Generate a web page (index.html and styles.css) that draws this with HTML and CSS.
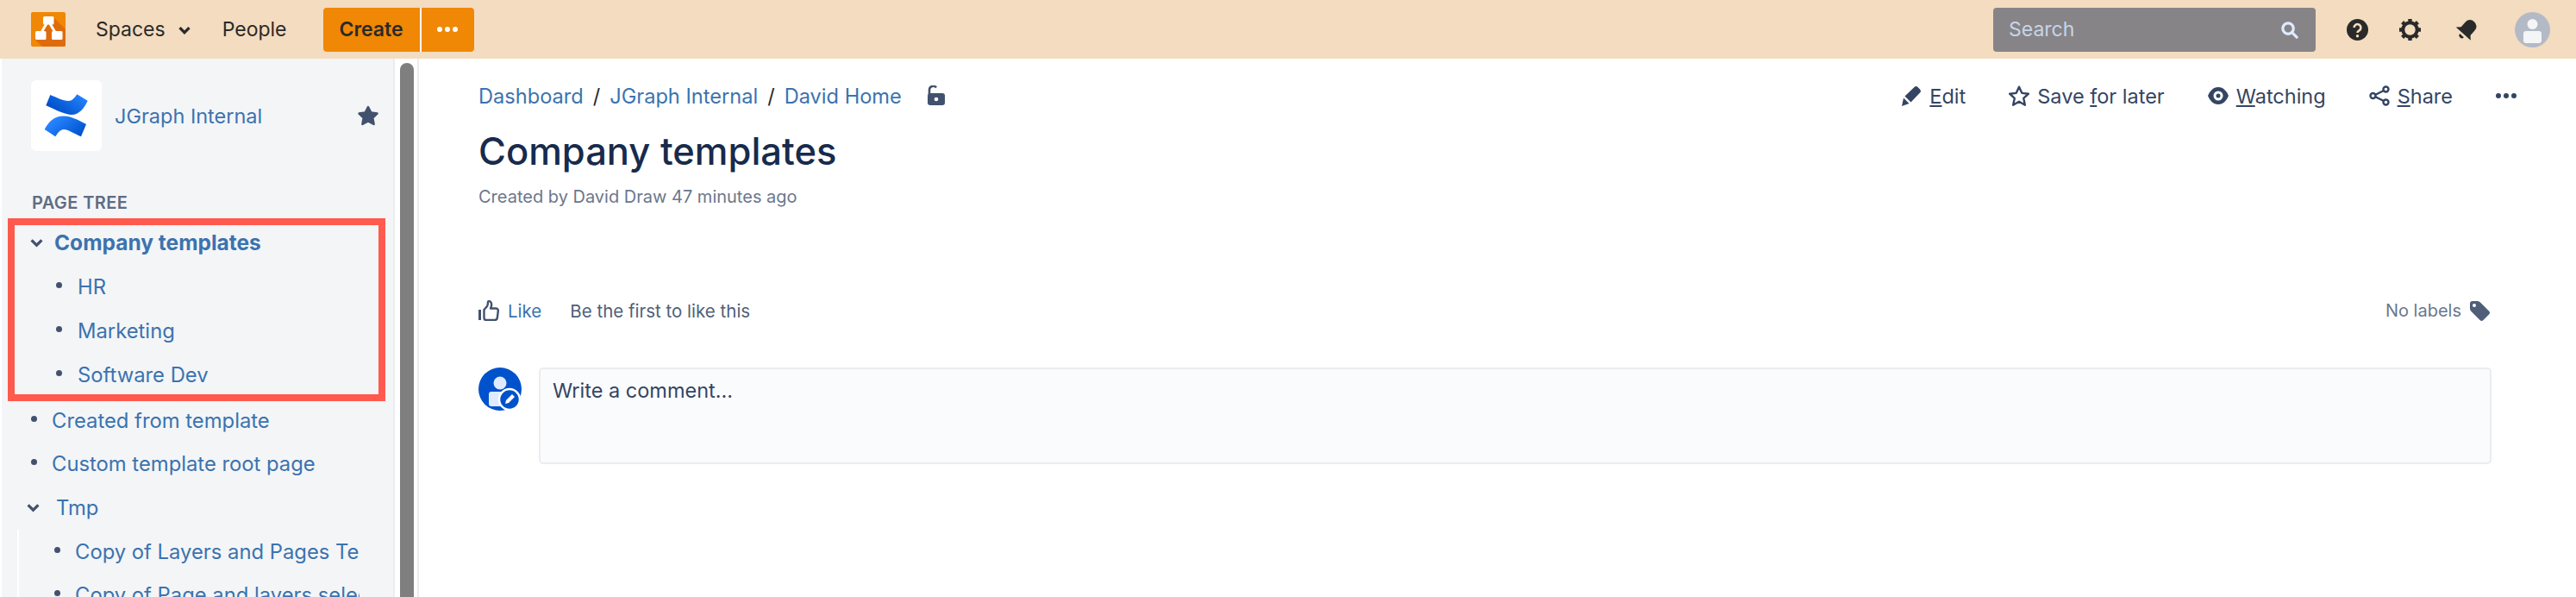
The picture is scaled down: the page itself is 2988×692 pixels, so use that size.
FILE: index.html
```html
<!DOCTYPE html>
<html lang="en">
<head>
  <meta charset="UTF-8" />
  <title>Company templates</title>
  <link rel="stylesheet" href="styles.css">
</head>
<body>

<header class="topbar">
  <div class="topbar-left">
    <svg class="app-logo" viewBox="0 0 40 40">
      <rect width="40" height="40" rx="2" fill="#f08705"/>
      <path d="M27 7 40 20V38a2 2 0 0 1-2 2H13L4 31z" fill="#df6c0c"/>
      <path d="M20 10 10 27M20 10 30 27" stroke="#fff" stroke-width="3" fill="none"/>
      <rect x="14" y="5" width="12.500" height="9.500" rx="1.500" fill="#fff"/>
      <rect x="5" y="22" width="12.500" height="10" rx="1.500" fill="#fff"/>
      <rect x="24" y="22" width="12.500" height="10" rx="1.500" fill="#fff"/>
    </svg>
    <span class="nav-item nav-spaces">Spaces
      <svg class="chev" viewBox="0 0 14 10"><path d="M2 2l5 5 5-5" fill="none" stroke="#2a2a2a" stroke-width="3"/></svg>
    </span>
    <span class="nav-item nav-people">People</span>
    <div class="create-group">
      <span class="create-btn">Create</span>
      <span class="create-more"><i></i><i></i><i></i></span>
    </div>
  </div>
  <div class="topbar-right">
    <div class="search">
      <span>Search</span>
      <svg viewBox="0 0 22 22"><circle cx="9.500" cy="9.500" r="6.500" fill="none" stroke="#deebff" stroke-width="3.400"/><path d="M14.500 14.500 20 20" stroke="#deebff" stroke-width="3.400" stroke-linecap="round"/></svg>
    </div>
    <svg class="top-icon" viewBox="0 0 25 25">
      <circle cx="12.500" cy="12.500" r="12.500" fill="#2a2a2a"/>
      <path d="M8.600 10a3.900 3.900 0 1 1 5.900 3.300c-1.300.8-2 1.300-2 2.700" fill="none" stroke="#f3dcc0" stroke-width="2.600"/>
      <circle cx="12.500" cy="19.800" r="1.700" fill="#f3dcc0"/>
    </svg>
    <svg class="top-icon" viewBox="0 0 25 25">
      <circle cx="12.500" cy="12.500" r="8.200" fill="none" stroke="#2a2a2a" stroke-width="4"/>
      <g stroke="#2a2a2a" stroke-width="4.400">
        <path d="M12.500 0v4M12.500 21v4M0 12.500h4M21 12.500h4M3.600 3.600l2.900 2.900M18.500 18.500l2.900 2.900M21.400 3.600l-2.900 2.900M6.500 18.500l-2.900 2.900"/>
      </g>
    </svg>
    <svg class="top-icon bell" viewBox="0 0 24 24">
      <g transform="rotate(42 12 12)" fill="#2a2a2a">
        <path d="M12 0a6.500 6.500 0 0 1 7 7v7l4 4H1l4-4V7a6.500 6.500 0 0 1 7-7z"/>
        <path d="M9 20.500h6a3 3 0 0 1-6 0z"/>
      </g>
    </svg>
    <svg class="top-avatar" viewBox="0 0 41 41">
      <circle cx="20.500" cy="20.500" r="20.500" fill="#b3bac5"/>
      <circle cx="20.500" cy="14" r="6" fill="#f4f5f7"/>
      <rect x="10" y="22" width="21" height="14" rx="3" fill="#f4f5f7"/>
    </svg>
  </div>
</header>

<div class="layout">
  <aside class="sidebar">
    <div class="space-head">
      <div class="space-logo">
        <svg viewBox="0 0 82 82" width="82" height="82">
          <defs>
            <linearGradient id="cfA" x1="1" y1="0.2" x2="0.2" y2="0.7"><stop offset="0" stop-color="#2684ff"/><stop offset="1" stop-color="#0052cc"/></linearGradient>
            <linearGradient id="cfB" x1="0.1" y1="0.4" x2="0.9" y2="0.9"><stop offset="0" stop-color="#2684ff"/><stop offset="1" stop-color="#0052cc"/></linearGradient>
          </defs>
          <path d="M22.300 17 17.300 29.300C30 35 40 40 47 40 56 40 62 32 65.700 23.700L53.300 16.300C50 21 48 24 43 24 37 24 30 20 22.300 17z" fill="url(#cfA)"/>
          <path d="M15.700 57C20 49 26 41.500 38 41.500 46 41.500 55 46 64 51L58 65.300C50 62 43 57 38 57 34 57 31 61 28.300 65.300z" fill="url(#cfB)"/>
        </svg>
      </div>
      <a class="space-name">JGraph Internal</a>
      <svg class="space-star" viewBox="0 0 26 25"><path d="M13 2l3.400 6.500 7.100 1-5.200 5 1.300 7.500L13 18.500 6.400 22l1.300-7.500-5.200-5 7.100-1z" fill="#42526e" stroke="#42526e" stroke-width="2.500" stroke-linejoin="round"/></svg>
    </div>
    <h6 class="tree-title">PAGE TREE</h6>
    <div class="tree">
      <div class="highlight">
        <div class="tree-row row-current"><svg class="tree-chev" viewBox="0 0 14 10"><path d="M1.500 2l5.500 5.500L12.500 2" fill="none" stroke="#42526e" stroke-width="3"/></svg><a>Company templates</a></div>
        <div class="tree-row row-child"><span class="dot"></span><a>HR</a></div>
        <div class="tree-row row-child"><span class="dot"></span><a>Marketing</a></div>
        <div class="tree-row row-child"><span class="dot"></span><a>Software Dev</a></div>
      </div>
      <div class="tree-row row-root"><span class="dot"></span><a>Created from template</a></div>
      <div class="tree-row row-root"><span class="dot"></span><a>Custom template root page</a></div>
      <div class="tree-row row-tmp"><svg class="tree-chev" viewBox="0 0 14 10"><path d="M1.500 2l5.500 5.500L12.500 2" fill="none" stroke="#42526e" stroke-width="3"/></svg><a>Tmp</a></div>
      <div class="subtree">
        <div class="tree-row row-sub"><span class="dot"></span><a>Copy of Layers and Pages Test</a></div>
        <div class="tree-row row-sub"><span class="dot"></span><a>Copy of Page and layers selection</a></div>
      </div>
    </div>
  </aside>
  <div class="scrollbar"><div class="thumb"></div></div>

  <main class="content">
    <div class="page-head">
      <nav class="crumbs">
        <a>Dashboard</a><span class="sep">/</span><a>JGraph Internal</a><span class="sep">/</span><a>David Home</a>
        <svg class="lock" viewBox="0 0 21 23"><path d="M3 10V5a4.500 4.500 0 0 1 8-2.500" fill="none" stroke="#42526e" stroke-width="2.600"/><rect x="1" y="9" width="20" height="14" rx="3" fill="#42526e"/><circle cx="11" cy="16" r="2.300" fill="#fff"/></svg>
      </nav>
      <div class="actions">
        <span class="action">
          <svg viewBox="0 0 24 24"><path d="M4.500 12.500 15.500 2a3 3 0 0 1 4 0l2.500 2.500a3 3 0 0 1 0 4L11.500 19.500z" fill="#344563"/><path d="M3 14.500l6.500 6.500L1 24z" fill="#344563"/></svg>
          <span><u>E</u>dit</span>
        </span>
        <span class="action">
          <svg viewBox="1 1 22 22"><path d="M12 2.500l3 6.600 7 .8-5.200 4.800 1.500 7.100L12 18.200l-6.300 3.600 1.500-7.100L2 9.900l7-.8z" fill="none" stroke="#344563" stroke-width="2.200" stroke-linejoin="round"/></svg>
          <span>Save <u>f</u>or later</span>
        </span>
        <span class="action">
          <svg viewBox="0 0 24 24"><path d="M12 2C6 2 2 7 0 12c2 5 6 10 12 10s10-5 12-10c-2-5-6-10-12-10z" fill="#344563"/><circle cx="12" cy="12" r="5.500" fill="#fff"/><circle cx="12" cy="12" r="2.500" fill="#344563"/></svg>
          <span><u>W</u>atching</span>
        </span>
        <span class="action">
          <svg viewBox="0 0 24 24"><path d="M19 5 5 12l14 7" fill="none" stroke="#344563" stroke-width="2.400"/><circle cx="19.500" cy="4.500" r="3" fill="#fff" stroke="#344563" stroke-width="2.400"/><circle cx="4.500" cy="12" r="3" fill="#fff" stroke="#344563" stroke-width="2.400"/><circle cx="19.500" cy="19.500" r="3" fill="#fff" stroke="#344563" stroke-width="2.400"/></svg>
          <span><u>S</u>hare</span>
        </span>
        <span class="action-more"><i></i><i></i><i></i></span>
      </div>
    </div>

    <h1 class="page-title">Company templates</h1>
    <p class="byline">Created by David Draw 47 minutes ago</p>

    <div class="like-row">
      <div class="like-left">
        <svg class="thumb-up" viewBox="0 0 24 24"><path d="M1.500 11v12" stroke="#42526e" stroke-width="3" fill="none"/><path d="M6.500 11 10 7c1-1.500 1-3 1-5 0-1 2.500-1.500 3.500.5 1 2 .5 5-.5 7h6c2 0 3 1 2.800 3l-1 8c-.2 1.500-1 2.500-3 2.500H9c-1.500 0-2.500-1-2.500-2.500z" fill="none" stroke="#42526e" stroke-width="2.400" stroke-linejoin="round"/></svg>
        <a class="like-link">Like</a>
        <span class="like-note">Be the first to like this</span>
      </div>
      <div class="labels">
        <span>No labels</span>
        <svg viewBox="0 0 23 23"><path d="M3 0h6c1 0 2 .5 3 1.500l10 10c1.300 1.300 1.300 2.700 0 4l-6.500 6.500c-1.300 1.300-2.700 1.300-4 0L1.500 12C.5 11 0 10 0 9V3c0-2 1-3 3-3z" fill="#505f79"/><circle cx="5" cy="5" r="2" fill="#fff"/></svg>
      </div>
    </div>

    <div class="comment-row">
      <svg class="comment-avatar" viewBox="0 0 50 50">
        <circle cx="25" cy="25" r="25" fill="#0052cc"/>
        <circle cx="25" cy="18" r="7.500" fill="#deebff"/>
        <rect x="12" y="28" width="26" height="17" rx="3" fill="#deebff"/>
        <circle cx="36" cy="37" r="12" fill="#0052cc" stroke="#fff" stroke-width="2.500"/>
        <path d="M31 42l1-4 7-7 3 3-7 7z" fill="#fff"/>
      </svg>
      <div class="comment-box">Write a comment...</div>
    </div>
  </main>
</div>

</body>
</html>
```

FILE: styles.css
```css
* { box-sizing: border-box; }
html, body { margin: 0; height: 100%; }
body { font-family: Inter, "Liberation Sans", sans-serif; background-color: #fff; color: #172b4d; height: 692px; overflow: hidden; }
a { color: #3b73af; text-decoration: none; }
svg { display: block; flex: none; }

.topbar { height: 68px; background-color: #f3dcc0; display: flex; justify-content: space-between; align-items: center; padding: 0 30px 0 36px; }
.topbar-left, .topbar-right { display: flex; align-items: center; }
.app-logo { width: 40px; height: 40px; }
.nav-item { font-size: 23px; color: #2a2a2a; display: flex; align-items: center; }
.nav-spaces { margin-left: 35px; }
.chev { width: 16px; height: 11px; margin-left: 14px; margin-top: 2px; }
.nav-people { margin-left: 36px; }
.create-group { display: flex; height: 51px; margin-left: 42px; background-color: #fff; border-radius: 4px; }
.create-btn { width: 112px; background-color: #f08705; border-radius: 4px 0 0 4px; font-size: 23px; font-weight: 600; color: #2a2a2a; display: flex; align-items: center; justify-content: center; }
.create-more { width: 61px; margin-left: 2px; background-color: #f08705; border-radius: 0 4px 4px 0; display: flex; align-items: center; justify-content: center; gap: 3px; }
.create-more i { width: 6px; height: 6px; border-radius: 50%; background-color: #fff; }

.search { width: 374px; height: 51px; background-color: #878487; border-radius: 4px; display: flex; align-items: center; justify-content: space-between; padding: 0 20px 0 18px; font-size: 23px; color: #c6d4e8; }
.search svg { width: 21px; height: 21px; }
.top-icon { width: 25px; height: 25px; margin-left: 36px; }
.top-icon.bell { margin-left: 41px; }
.top-avatar { width: 41px; height: 41px; margin-left: 43px; }

.layout { display: flex; height: 624px; padding-left: 2px; }
.sidebar { width: 456px; background-color: #f4f5f7; border-right: 2px solid #ebecf0; padding: 25px 0 0 34px; overflow: hidden; }
.scrollbar { width: 28px; flex: none; padding: 5px 4px 0 6px; border-right: 2px solid #ebecf0; background-color: #fff; }
.thumb { width: 16px; height: 100%; background-color: #7f7f7f; border-radius: 8px 8px 0 0; }

.space-head { display: flex; align-items: center; height: 82px; }
.space-logo { width: 82px; height: 82px; background-color: #fff; border-radius: 6px; }
.space-name { font-size: 23.500px; margin-left: 15px; flex: 1; }
.space-star { width: 26px; height: 25px; margin-right: 16px; }

.tree-title { margin: 48px 0 0 1px; font-size: 20px; line-height: 24px; font-weight: 600; letter-spacing: .4px; color: #5e6c84; }
.tree { margin: 6px 0 0 -27px; }
.highlight { width: 438px; height: 212px; border: 8px solid #ff5a4d; }
.tree-row { height: 50.600px; display: flex; align-items: center; font-size: 23.800px; white-space: nowrap; }
.tree-chev { width: 15px; height: 11px; }
.dot { width: 7px; height: 7px; border-radius: 50%; background-color: #42526e; flex: none; margin-top: -4px; }
.row-current { padding: 0 0 6px 18px; font-size: 24.500px; font-weight: 700; height: 46px; }
.row-current a { margin-left: 13px; }
.row-child { padding-left: 48px; height: 51px; }
.row-child a { margin-left: 18px; }
.row-root { padding-left: 27px; }
.row-root a { margin-left: 17px; }
.highlight + .row-root { margin-top: -3px; }
.row-tmp { padding-left: 22px; }
.row-tmp a { margin-left: 19px; }
.subtree { margin-left: 11px; padding-left: 41px; border-left: 2px solid #fff; width: 397px; }
.row-sub { overflow: hidden; }
.row-sub a { margin-left: 17px; }

.content { flex: 1; min-width: 0; padding: 0 98px 0 69px; }
.page-head { display: flex; justify-content: space-between; height: 86px; align-items: center; }
.crumbs { display: flex; align-items: center; font-size: 23.600px; }
.sep { color: #2a2a2a; margin: 0 11px; }
.lock { width: 21px; height: 23px; margin-left: 29px; margin-top: -2px; }
.actions { display: flex; align-items: center; font-size: 23.500px; color: #344563; margin-right: -29px; }
.action { display: flex; align-items: center; gap: 9px; margin-right: 50px; }
.action svg { width: 24px; height: 24px; }
.action-more { display: flex; gap: 3px; }
.action-more i { width: 6px; height: 6px; border-radius: 50%; background-color: #344563; }

.page-title { margin: -5px 0 0; font-size: 43.500px; line-height: 52px; font-weight: 500; }
.byline { margin: 14px 0 0; font-size: 20px; line-height: 26px; color: #6b778c; }

.like-row { display: flex; justify-content: space-between; align-items: center; margin-top: 106px; height: 26px; }
.like-left { display: flex; align-items: center; font-size: 20.500px; }
.thumb-up { width: 24px; height: 24px; }
.like-link { margin-left: 10px; }
.like-note { margin-left: 33px; color: #505f79; }
.labels { display: flex; align-items: center; gap: 10px; font-size: 20px; color: #6b778c; margin-right: 2px; }
.labels svg { width: 23px; height: 23px; }

.comment-row { display: flex; margin-top: 53px; }
.comment-avatar { width: 50px; height: 50px; }
.comment-box { flex: 1; margin-left: 20px; height: 112px; background-color: #fafbfc; border: 2px solid #ebecf0; border-radius: 5px; padding: 11px 14px; font-size: 23.500px; line-height: 28px; color: #344563; }
```
